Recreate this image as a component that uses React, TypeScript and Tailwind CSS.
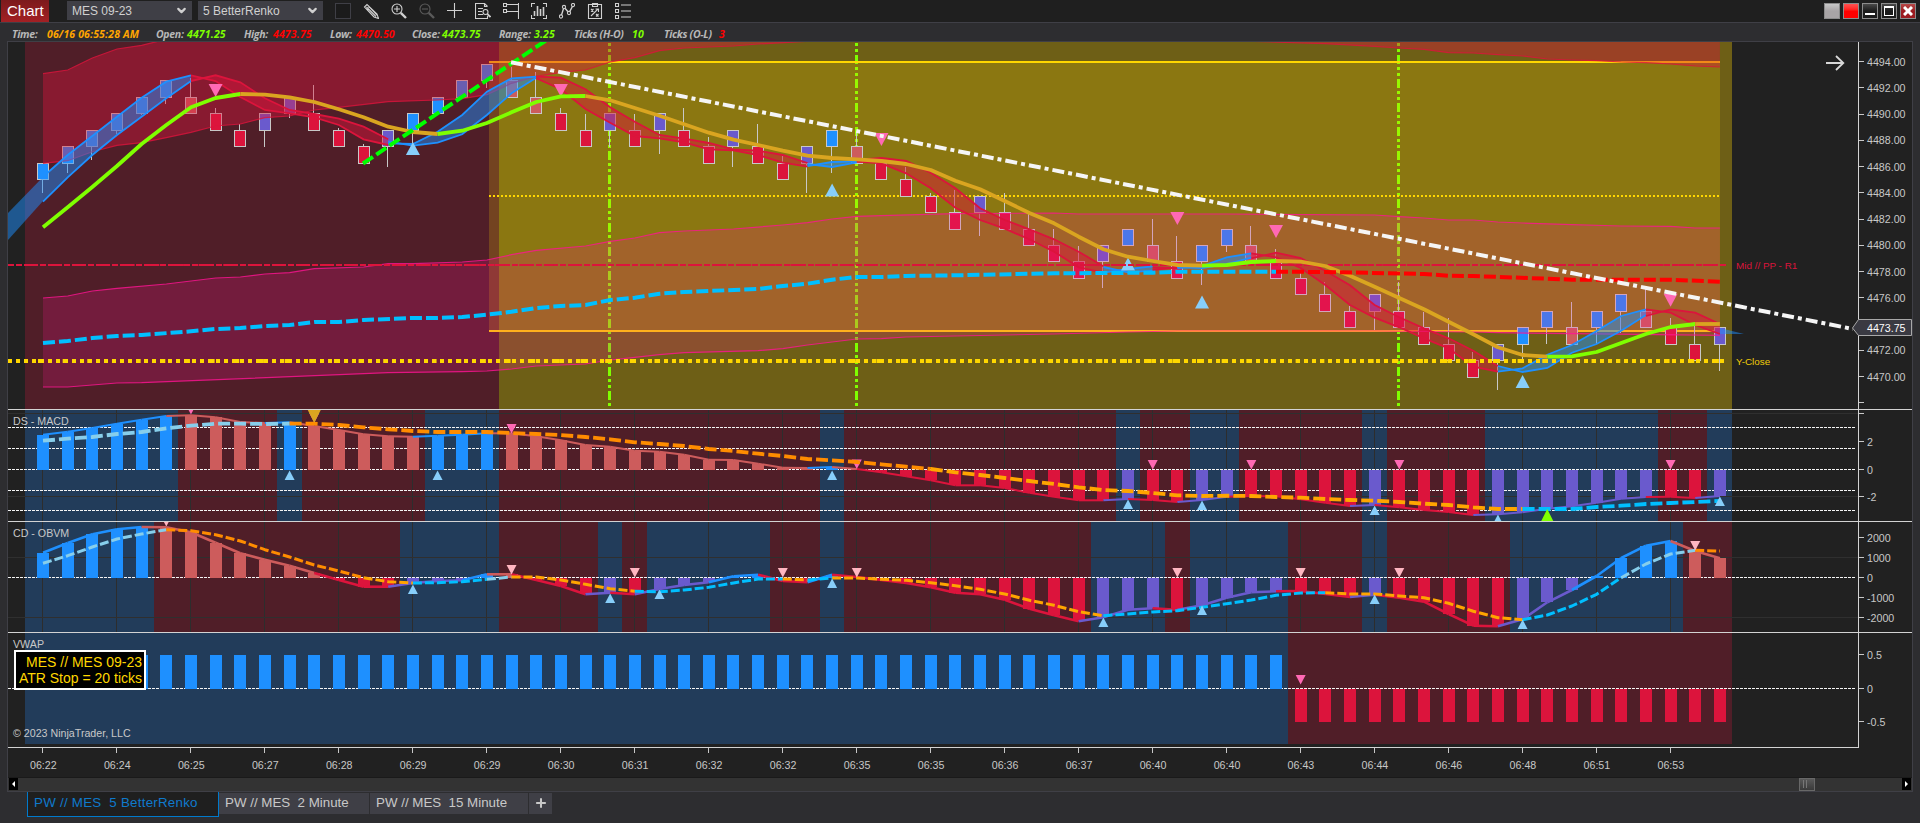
import React from 'react';
import { ChevronDown, Plus } from 'lucide-react';

type Point = [number, number];
type Run = { from: number; to: number; color: string };

const BLUE = '#1e90ff';
const SLATE = '#6a5acd';
const CRIMSON = '#dc143c';
const INDIAN = '#cd5c5c';
const SKY = '#87ceeb';
const DEEP_SKY = '#00bfff';
const DARK_ORANGE = '#ff8c00';
const ORANGE = '#ffa500';
const LIME = '#7fff00';
const GOLDENROD = '#daa520';
const PINK = '#ff69b4';
const LIGHT_PINK = '#ffb6c1';
const LIGHT_SKY = '#87cefa';

const KIND: Record<string, string> = { U: BLUE, u: SLATE, D: CRIMSON, d: INDIAN };

const BARS = 69;
const x = (i: number) => 43 + 24.66 * i;
// Price pane values are stored in thirds of a pixel from the window top,
// indicator values in thirds of a pixel from y = 400
const py = (v: number) => v / 3;
const iy = (v: number) => 400 + v / 3;

const expand = (runs: string) =>
  runs.split(' ').flatMap(r => Array<string>(Number(r.slice(1))).fill(r[0]));

const toPath = (points: Point[], y: (v: number) => number) =>
  points.map(([i, v], n) => `${n ? 'L' : 'M'}${x(i).toFixed(1)} ${y(v).toFixed(1)}`).join('');

const slice = (values: number[], from: number, to: number): Point[] =>
  values.slice(from, to + 1).map((v, n) => [from + n, v]);

// [level, kind, wick end]
const candles: [number, string, number][] = [
  [6, 'U', 578], [5, 'U', 518], [4, 'U', 480], [3, 'U', 402], [2, 'U', 345], [1, 'U', 312],
  [2, 'd', 233], [3, 'D', 324], [4, 'D', 372], [3, 'u', 440], [2, 'u', 353], [3, 'D', 255],
  [4, 'D', 383], [5, 'D', 432], [4, 'u', 500], [3, 'U', 437], [2, 'U', 330], [1, 'U', 280],
  [0, 'U', 264], [1, 'd', 200], [2, 'd', 216], [3, 'D', 324], [4, 'D', 342], [3, 'u', 440],
  [4, 'D', 342], [3, 'u', 462], [4, 'D', 324], [5, 'D', 411], [4, 'u', 500], [5, 'D', 372],
  [6, 'D', 468], [5, 'u', 579], [4, 'U', 519], [5, 'd', 395], [6, 'D', 500], [7, 'D', 501],
  [8, 'D', 579], [9, 'D', 570], [8, 'u', 708], [9, 'D', 579], [10, 'D', 640], [11, 'D', 687],
  [12, 'D', 738], [11, 'u', 864], [10, 'U', 700], [11, 'd', 657], [12, 'D', 708], [11, 'U', 855],
  [10, 'U', 756], [11, 'd', 678], [12, 'D', 747], [13, 'D', 820], [14, 'D', 846], [15, 'D', 918],
  [14, 'u', 990], [15, 'D', 846], [16, 'D', 935], [17, 'D', 954], [18, 'D', 1055], [17, 'u', 1170],
  [16, 'U', 1090], [15, 'U', 1031], [16, 'd', 906], [15, 'U', 1031], [14, 'U', 1000],
  [15, 'd', 868], [16, 'D', 954], [17, 'D', 965], [16, 'u', 1112]
];

const crimsonLower: Point[] = [
  [0, 490], [1, 482], [2, 455], [3, 436], [4, 428], [5, 413], [6, 397], [7, 378], [8, 372],
  [9, 353], [10, 348], [11, 330], [12, 322], [14, 305], [16, 300], [17, 296], [18, 284],
  [19, 250], [20, 229], [21, 217], [22, 210], [23, 186], [24, 173], [25, 152], [26, 144],
  [28, 138], [29, 132], [31, 124], [49, 124], [51, 129], [52, 131], [54, 139], [55, 144],
  [56, 148], [57, 158], [58, 159], [59, 164], [60, 168], [61, 177], [62, 180], [63, 182],
  [64, 186], [65, 188], [66, 192], [67, 198], [68, 201]
];
const crimsonUpper: Point[] = [[0, 221], [1, 210], [2, 174], [3, 147], [4, 136], [5, 118], [68, 118]];

const magentaUpper: Point[] = [
  [0, 894], [1, 888], [2, 873], [3, 865], [5, 852], [7, 834], [8, 831], [9, 822], [10, 818],
  [11, 806], [13, 801], [14, 791], [15, 791], [17, 786], [18, 780], [19, 764], [20, 751],
  [22, 738], [23, 724], [24, 714], [25, 698], [26, 693], [28, 687], [30, 675], [31, 668],
  [32, 657], [33, 649], [34, 647], [37, 641], [41, 639], [42, 642], [48, 642], [54, 645],
  [55, 650], [56, 654], [57, 660], [58, 660], [59, 666], [60, 669], [62, 674], [64, 678],
  [66, 679], [67, 684], [68, 684]
];
const magentaLower: Point[] = [
  [0, 1161], [1, 1161], [3, 1149], [4, 1148], [14, 1118], [17, 1115], [18, 1113], [19, 1107],
  [20, 1098], [22, 1092], [23, 1080], [24, 1072], [25, 1064], [26, 1058], [29, 1052],
  [30, 1046], [31, 1035], [32, 1026], [33, 1017], [34, 1016], [35, 1011], [37, 1008],
  [41, 1002], [44, 996], [46, 993], [54, 993], [58, 996], [59, 998], [62, 1001], [68, 1006]
];

const vwapBlue: Point[] = [
  [0, 1029], [1, 1023], [2, 1014], [3, 1008], [4, 1005], [6, 994], [7, 987], [8, 984], [9, 978],
  [10, 975], [11, 966], [12, 966], [13, 960], [15, 954], [16, 954], [17, 951], [18, 944],
  [19, 935], [20, 924], [21, 918], [22, 915], [23, 900], [24, 893], [25, 881], [26, 876],
  [29, 867], [30, 858], [31, 851], [32, 839], [33, 831], [34, 831], [35, 828], [37, 826],
  [41, 820], [45, 818], [46, 815], [50, 815]
];
const vwapRed: Point[] = [[50, 815], [52, 816], [56, 822], [57, 827], [58, 828], [61, 836], [62, 839], [66, 839], [68, 845]];

const average = [
  682, 622, 561, 498, 432, 375, 322, 294, 282, 284, 292, 306, 328, 352, 380, 396, 402, 392, 369,
  337, 306, 289, 288, 301, 324, 347, 373, 398, 419, 435, 452, 467, 474, 478, 483, 492, 510, 542,
  568, 603, 639, 670, 710, 748, 770, 783, 795, 797, 795, 786, 783, 785, 798, 827, 860, 894, 928,
  965, 1003, 1042, 1065, 1070, 1069, 1056, 1029, 1002, 981, 972, 972
];
const averageRuns: Run[] = [
  { from: 0, to: 8, color: LIME },
  { from: 8, to: 16, color: GOLDENROD },
  { from: 16, to: 22, color: LIME },
  { from: 22, to: 47, color: GOLDENROD },
  { from: 47, to: 50, color: LIME },
  { from: 50, to: 61, color: GOLDENROD },
  { from: 61, to: 67, color: LIME },
  { from: 67, to: 68, color: GOLDENROD }
];

const ribbons: { start: number; color: string; a: number[]; b: number[] }[] = [
  { start: 0, color: BLUE, a: [530, 465, 408, 350, 293, 245, 226], b: [605, 532, 465, 405, 350, 295, 243] },
  { start: 6, color: CRIMSON, a: [226, 243, 291, 330, 340, 352, 375, 418, 435], b: [243, 226, 247, 295, 330, 342, 356, 380, 418] },
  { start: 14, color: BLUE, a: [430, 432, 395, 345, 275, 235, 230], b: [425, 437, 428, 403, 345, 280, 233] },
  {
    start: 20,
    color: CRIMSON,
    a: [235, 268, 327, 368, 408, 415, 427, 448, 451, 465, 488, 500],
    b: [230, 233, 268, 322, 365, 405, 416, 429, 448, 452, 465, 489]
  },
  { start: 31, color: BLUE, a: [498, 486, 484], b: [492, 501, 487] },
  {
    start: 33,
    color: CRIMSON,
    a: [485, 490, 520, 565, 623, 660, 686, 718, 755, 802, 818],
    b: [480, 474, 483, 518, 565, 625, 660, 688, 718, 755, 799]
  },
  { start: 43, color: BLUE, a: [818, 807, 799], b: [801, 817, 812] },
  { start: 45, color: CRIMSON, a: [810, 802], b: [802, 804] },
  { start: 46, color: BLUE, a: [804, 798, 772, 760], b: [802, 804, 792, 773] },
  {
    start: 49,
    color: CRIMSON,
    a: [760, 772, 804, 855, 915, 953, 982, 1015, 1045, 1100, 1115],
    b: [775, 758, 774, 812, 856, 915, 952, 985, 1015, 1052, 1098]
  },
  { start: 59, color: BLUE, a: [1115, 1105, 1064, 1035, 993, 948, 928], b: [1098, 1116, 1104, 1058, 1032, 992, 945] },
  { start: 65, color: CRIMSON, a: [928, 938, 975, 1002], b: [948, 928, 938, 972] }
];

const macd = [
  104, 95, 84, 71, 59, 48, 46, 52, 66, 69, 67, 78, 90, 103, 109, 110, 107, 104, 100, 100, 109,
  121, 135, 140, 152, 155, 164, 179, 180, 191, 203, 204, 201, 207, 217, 229, 241, 256, 256, 264,
  278, 290, 301, 301, 297, 300, 306, 300, 290, 288, 289, 298, 308, 318, 315, 322, 330, 336, 345,
  343, 337, 326, 319, 308, 296, 291, 290, 294, 288
];
const macdKinds = expand('U6 d4 U1 d5 U3 d13 U1 d1 D10 u1 D2 u2 D5 u1 D4 u7 D2 u1');
const macdSignal = [
  122, 116, 111, 102, 96, 85, 77, 71, 71, 72, 71, 71, 75, 82, 88, 93, 96, 96, 96, 99, 102, 105,
  111, 118, 127, 132, 138, 147, 153, 161, 168, 177, 181, 186, 193, 200, 207, 217, 225, 234, 243,
  252, 262, 270, 273, 279, 286, 288, 287, 288, 291, 293, 297, 300, 302, 306, 311, 315, 322, 327,
  327, 327, 327, 321, 317, 312, 309, 306, 303
];
const macdRuns: Run[] = [
  { from: 0, to: 10, color: SKY },
  { from: 10, to: 36, color: DARK_ORANGE },
  { from: 36, to: 60, color: ORANGE },
  { from: 60, to: 68, color: DEEP_SKY }
];
const macdZones = [6, 10, 11, 16, 19, 32, 33, 44, 45, 47, 49, 54, 55, 59, 66, 68];

const obvm = [
  458, 429, 403, 388, 381, 382, 397, 428, 460, 479, 497, 519, 540, 560, 560, 549, 543, 541, 523,
  523, 540, 558, 583, 578, 583, 567, 555, 547, 529, 524, 543, 547, 524, 531, 540, 549, 562, 578,
  583, 599, 626, 646, 664, 652, 629, 625, 629, 616, 593, 577, 574, 573, 582, 591, 584, 593, 605,
  642, 677, 679, 658, 607, 570, 528, 474, 437, 423, 453, 475
];
const obvmKinds = expand('U5 d7 D3 u3 U1 d1 D3 u1 D1 u3 U2 D2 U1 D10 u3 D1 u4 D3 u1 D5 u3 U4 d2');
const obvmSignal = [
  490, 467, 441, 417, 402, 389, 392, 404, 423, 449, 471, 495, 513, 533, 545, 549, 548, 545, 538,
  531, 531, 540, 553, 566, 574, 575, 570, 562, 549, 537, 537, 540, 534, 534, 538, 541, 548, 557,
  568, 582, 601, 616, 635, 647, 642, 636, 632, 622, 611, 600, 586, 579, 578, 582, 582, 588, 593,
  610, 634, 653, 659, 645, 618, 583, 533, 492, 462, 451, 453
];
const obvmRuns: Run[] = [
  { from: 0, to: 5, color: SKY },
  { from: 5, to: 13, color: DARK_ORANGE },
  { from: 13, to: 15, color: ORANGE },
  { from: 15, to: 18, color: DEEP_SKY },
  { from: 18, to: 19, color: SKY },
  { from: 19, to: 24, color: ORANGE },
  { from: 24, to: 30, color: DEEP_SKY },
  { from: 30, to: 31, color: ORANGE },
  { from: 31, to: 32, color: DEEP_SKY },
  { from: 32, to: 43, color: ORANGE },
  { from: 43, to: 52, color: DEEP_SKY },
  { from: 52, to: 60, color: ORANGE },
  { from: 60, to: 64, color: DEEP_SKY },
  { from: 64, to: 67, color: SKY },
  { from: 67, to: 68, color: DARK_ORANGE }
];
const obvmZones = [5, 15, 19, 23, 24, 25, 30, 32, 33, 43, 46, 47, 51, 54, 55, 60, 67];

const times = [
  '06:22', '06:24', '06:25', '06:27', '06:28', '06:29', '06:29', '06:30', '06:31', '06:32',
  '06:32', '06:35', '06:35', '06:36', '06:37', '06:40', '06:40', '06:43', '06:44', '06:46',
  '06:48', '06:51', '06:53'
];

const indicatorTicks: [number, string][] = [
  [7, ''], [40, ''], [125, '2'], [208, '0'], [289, '-2'],
  [413, '2000'], [472, '1000'], [532, '0'], [592, '-1000'], [652, '-2000'],
  [764, '0.5'], [865, '0'], [965, '-0.5']
];

const Down = ({ i, y, w = 10, h = 9.5, fill = PINK }: { i: number; y: number; w?: number; h?: number; fill?: string }) => (
  <polygon points={`${x(i) - w / 2},${y} ${x(i) + w / 2},${y} ${x(i)},${y + h}`} fill={fill} />
);

const Up = ({ i, y, w = 10, h = 9.5, fill = LIGHT_SKY }: { i: number; y: number; w?: number; h?: number; fill?: string }) => (
  <polygon points={`${x(i) - w / 2},${y + h} ${x(i) + w / 2},${y + h} ${x(i)},${y}`} fill={fill} />
);

const Zones = ({ starts, y, height }: { starts: number[]; y: number; height: number }) => {
  const edges = [25, ...starts.map(i => Math.round(30.5 + 24.66 * i)), 1732];
  return (
    <>
      {edges.slice(0, -1).map((left, n) => (
        <rect key={n} x={left} y={y} width={edges[n + 1] - left} height={height} fill={n % 2 ? '#501e28' : '#223c5a'} />
      ))}
    </>
  );
};

const Histogram = ({ values, kinds, zero, stroke }: { values: number[]; kinds: string[]; zero: number; stroke: number }) => (
  <>
    {values.map((v, i) => {
      const top = Math.round(Math.min(iy(v), zero));
      const bottom = Math.round(Math.max(iy(v), zero));
      return <rect key={i} x={Math.round(x(i)) - 6} y={top} width={12} height={bottom - top} fill={KIND[kinds[i]]} />;
    })}
    {values.slice(1).map((_, n) => (
      <path key={n} d={toPath(slice(values, n, n + 1), iy)} stroke={KIND[kinds[n + 1]]} strokeWidth={stroke} fill="none" />
    ))}
  </>
);

const Runs = ({ values, runs, y, width, dash }: { values: number[]; runs: Run[]; y: (v: number) => number; width: number; dash?: string }) => (
  <>
    {runs.map(r => (
      <path
        key={r.from}
        d={toPath(slice(values, r.from, r.to), y)}
        stroke={r.color}
        strokeWidth={width}
        strokeDasharray={dash}
        strokeLinejoin="round"
        fill="none"
      />
    ))}
  </>
);

const Band = ({ upper, lower, color, opacity }: { upper: Point[]; lower: Point[]; color: string; opacity: number }) => (
  <>
    <path
      d={`${toPath(upper, py)}${toPath([...lower].reverse(), py).replace('M', 'L')}Z`}
      fill={color}
      fillOpacity={opacity}
    />
    <path d={toPath(upper, py)} stroke={color} strokeOpacity={0.8} strokeWidth={1.2} fill="none" />
    <path d={toPath(lower, py)} stroke={color} strokeOpacity={0.8} strokeWidth={1.2} fill="none" />
  </>
);

const PricePane = () => (
  <g clipPath="url(#price)">
    <rect x={25} y={42} width={474} height={368} fill="#501e28" />
    <rect x={499} y={42} width={1233} height={368} fill="#6e5f16" />

    {/* Session markers */}
    {[609.5, 856.5, 1398.5].map(cx => (
      <path key={cx} d={`M${cx} 31V410`} stroke={LIME} strokeWidth={3} strokeDasharray="9 3 3 3 3 3" />
    ))}

    {/* Opening range */}
    <rect x={489} y={62} width={1231} height={269} fill="#ffd700" fillOpacity={0.2} />
    <path d="M489 62H1720" stroke="#ffd700" strokeWidth={2} />
    <path d="M489 331H1720" stroke="#ffd700" strokeWidth={2} />
    <path d="M489 196H1719" stroke="#ffd700" strokeWidth={2} strokeDasharray="2 2" />

    {/* Candles */}
    <g shapeRendering="crispEdges">
      {candles.map(([level, kind, wick], i) => {
        const top = Math.round((192 + 49.37 * level) / 3);
        const bottom = Math.round((192 + 49.37 * (level + 1)) / 3);
        const cx = Math.round(x(i));
        const up = kind.toUpperCase() === 'U';
        const from = up ? bottom : Math.min(top, wick / 3);
        const to = up ? Math.max(bottom, wick / 3) : top;
        return (
          <g key={i}>
            <rect x={cx - 1} y={from} width={1} height={to - from} fill="#c8c8c8" />
            <rect x={cx - 6} y={top} width={12} height={bottom - top + 1} fill="#c8c8c8" />
            <rect x={cx - 5} y={top + 1} width={10} height={bottom - top - 1} fill={KIND[kind]} />
          </g>
        );
      })}
    </g>

    <Band upper={crimsonUpper} lower={crimsonLower} color={CRIMSON} opacity={0.4} />
    <Band upper={magentaUpper} lower={magentaLower} color="#ff1493" opacity={0.2} />

    {/* Trend ribbon */}
    <polygon points="8,213 43,177 43,201 8,240" fill={BLUE} fillOpacity={0.5} />
    <polygon points="1720,328 1744,334 1720,334" fill={BLUE} fillOpacity={0.5} />
    {ribbons.map(({ start, color, a, b }) => {
      const lineA = a.map((v, n): Point => [start + n, v]);
      const lineB = b.map((v, n): Point => [start + n, v]);
      return (
        <g key={start}>
          <path
            d={`${toPath(lineA, py)}${toPath([...lineB].reverse(), py).replace('M', 'L')}Z`}
            fill={color}
            fillOpacity={0.48}
          />
          <path d={toPath(lineA, py)} stroke={color} strokeWidth={1.8} fill="none" />
          <path d={toPath(lineB, py)} stroke={color} strokeWidth={1.8} fill="none" />
        </g>
      );
    })}

    {/* Signals */}
    {([[7, 84], [21, 84], [34, 133], [46, 212], [50, 225], [66, 293.7]] as Point[]).map(([i, y]) => (
      <Down key={i} i={i} y={y} w={14} h={13} />
    ))}
    {([[15, 142], [32, 183.5], [44, 257.5], [47, 295.5], [60, 375]] as Point[]).map(([i, y]) => (
      <Up key={i} i={i} y={y} w={14} h={13} />
    ))}

    <path d="M8 265H1726" stroke={CRIMSON} strokeWidth={2} strokeDasharray="6 2" />
    <path d="M26 265H1720" stroke={CRIMSON} strokeWidth={2} strokeDasharray="10 14.66" />
    <Runs values={average} runs={averageRuns} y={py} width={3.8} />
    <path d={toPath(vwapBlue, py)} stroke={DEEP_SKY} strokeWidth={4} strokeDasharray="12 4" fill="none" />
    <path d={toPath(vwapRed, py)} stroke="#ff0000" strokeWidth={4} strokeDasharray="12 4" fill="none" />
    <path d="M8 361H1725" stroke="#ffd700" strokeWidth={4} strokeDasharray="4 4" />
    <path d="M38 361H1725" stroke="#ffd700" strokeWidth={4} strokeDasharray="4 20.66" />

    <path d="M363 163.5L560 31" stroke="#00ff00" strokeWidth={4} strokeDasharray="12 4" />
  </g>
);

const ChartCanvas = () => (
  <svg className="block h-[735px] w-[1904px]" viewBox="8 42 1904 735">
    <defs>
      <clipPath id="price"><rect x={7} y={42} width={1852} height={367} /></clipPath>
      <clipPath id="macd"><rect x={7} y={410} width={1852} height={111} /></clipPath>
      <clipPath id="obvm"><rect x={7} y={522} width={1852} height={110} /></clipPath>
    </defs>
    <rect x={7} y={42} width={1905} height={735} fill="#212121" />
    <PricePane />

    {/* Indicator backgrounds and grid */}
    <g shapeRendering="crispEdges">
      <Zones starts={macdZones} y={410} height={111} />
      <Zones starts={obvmZones} y={522} height={110} />
      <Zones starts={[51]} y={633} height={111} />
      {times.map((_, n) => (
        <rect key={n} x={Math.round(x(n * 3)) - 1} y={410} width={1} height={222} fill="#2d2d2d" />
      ))}
      {[40, 289, 472, 652].map(v => (
        <rect key={v} x={7} y={Math.floor(iy(v))} width={1851} height={1} fill="#2f2f2f" />
      ))}
    </g>

    <g clipPath="url(#macd)">
      {[82, 145, 208, 271, 331].map(v => (
        <path key={v} d={`M8 ${Math.floor(iy(v)) + 0.5}H1856`} stroke="#f5f5f5" strokeDasharray="3 1" />
      ))}
      <Histogram values={macd} kinds={macdKinds} zero={469.5} stroke={2} />
      {([[6, 405], [11, 413], [19, 424], [33, 459.5], [45, 460], [49, 460], [55, 460], [66, 460]] as Point[]).map(([i, y]) => (
        <Down key={i} i={i} y={y} />
      ))}
      <Runs values={macdSignal} runs={macdRuns} y={iy} width={3.8} dash="12 4" />
      <Down i={11} y={409} w={14} h={14} fill={GOLDENROD} />
      {([[10, 470.5], [16, 470.5], [32, 470.5], [44, 499.5], [47, 500.5], [54, 505.5], [59, 514.5], [68, 496.5]] as Point[]).map(([i, y]) => (
        <Up key={i} i={i} y={y} />
      ))}
      <Up i={61} y={509} w={12} h={12} fill={LIME} />
    </g>

    <g clipPath="url(#obvm)">
      <path d="M8 577.5H1856" stroke="#f5f5f5" strokeDasharray="3 1" />
      <Histogram values={obvm} kinds={obvmKinds} zero={577.5} stroke={2.6} />
      <Runs values={obvmSignal} runs={obvmRuns} y={iy} width={3} dash="9 3" />
      {([[5, 517], [19, 565], [24, 568], [30, 568], [33, 568], [46, 568], [51, 568], [55, 568], [67, 541]] as Point[]).map(([i, y]) => (
        <Down key={i} i={i} y={y} fill={LIGHT_PINK} />
      ))}
      {([[15, 584.5], [23, 593.5], [25, 589.5], [32, 578.5], [43, 617.5], [47, 605.5], [54, 594.5], [60, 619.5]] as Point[]).map(([i, y]) => (
        <Up key={i} i={i} y={y} />
      ))}
    </g>

    <path d="M8 688.5H1856" stroke="#f5f5f5" strokeDasharray="3 1" />
    {Array.from({ length: BARS }, (_, i) => (
      <rect
        key={i}
        x={Math.round(x(i)) - 6}
        y={i < 51 ? 655 : 689}
        width={12}
        height={i < 51 ? 34 : 33}
        fill={i < 51 ? BLUE : CRIMSON}
      />
    ))}
    <Down i={51} y={675} />

    {/* Frame lines and axes */}
    <g fill="#d3d3d3" shapeRendering="crispEdges">
      <rect x={7} y={409} width={1905} height={1} />
      <rect x={7} y={521} width={1905} height={1} />
      <rect x={7} y={632} width={1905} height={1} />
      <rect x={7} y={747} width={1852} height={1} />
      <rect x={1858} y={42} width={1} height={706} />
    </g>

    <g fill="#c8c8c8" fontFamily="'Liberation Sans', Arial, sans-serif" fontSize={10.67}>
      {/* The 4474 label gives way to the last price tag */}
      {Array.from({ length: 13 }, (_, n) => n).filter(n => n !== 10).map(n => {
        const y = 61.5 + n * 26.25;
        return (
          <g key={n}>
            <rect x={1859} y={Math.round(y - 0.5)} width={5} height={1} />
            <text x={1867} y={y + 4}>{(4494 - n * 2).toFixed(2)}</text>
          </g>
        );
      })}
      {indicatorTicks.map(([v, label]) => (
        <g key={v}>
          <rect x={1859} y={Math.floor(iy(v))} width={5} height={1} />
          {label && <text x={1867} y={iy(v) + 4.4}>{label}</text>}
        </g>
      ))}
      {times.map((t, n) => (
        <g key={n}>
          <rect x={Math.round(x(n * 3)) - 1} y={748} width={1} height={5} />
          <text x={x(n * 3) + 0.3} y={769} textAnchor="middle">{t}</text>
        </g>
      ))}
      <text x={13} y={425}>DS - MACD</text>
      <text x={13} y={537}>CD - OBVM</text>
      <text x={13} y={648}>VWAP</text>
      <text x={13} y={737}>© 2023 NinjaTrader, LLC</text>
    </g>
    <g fontFamily="'Liberation Sans', Arial, sans-serif" fontSize={9.9}>
      <text x={1736} y={269} fill={CRIMSON}>Mid // PP - R1</text>
      <text x={1736} y={365} fill="#f0cc08">Y-Close</text>
    </g>

    <path d="M511 62.3L1853 329" stroke="#f5f5f5" strokeWidth={4} strokeDasharray="12 4 4 4" />

    {/* Last price */}
    <path d="M1852.5 328L1858.5 319.5H1911.5V335.5H1858.5Z" fill="#3a3a42" stroke="#a8a8a8" />
    <text x={1867} y={332} fill="#ffffff" fontFamily="'Liberation Sans', Arial, sans-serif" fontSize={10.67}>4473.75</text>

    <path d="M1826 63H1843M1836 56L1843.3 63L1836 70" stroke="#d8d8d8" strokeWidth={1.8} fill="none" />
  </svg>
);

const toolIcons: { name: string; dim?: boolean; body: React.ReactNode }[] = [
  {
    name: 'pencil',
    body: <path d="M1.5 4L4 1.5L14 11L15.5 15.5L11 14ZM4 6.5L6.5 4M3.5 4L13 13.5M5.5 3L14 12" />
  },
  {
    name: 'zoom-in',
    body: (
      <>
        <circle cx="6" cy="6" r="5" />
        <path d="M3 6H9M6 3V9" />
        <path d="M9.8 9.8L15 15" strokeWidth="2.4" />
      </>
    )
  },
  {
    name: 'zoom-out',
    dim: true,
    body: (
      <>
        <circle cx="6" cy="6" r="5" />
        <path d="M3 6H9" />
        <path d="M9.8 9.8L15 15" strokeWidth="2.4" />
      </>
    )
  },
  { name: 'crosshair', body: <path d="M7.5 0V15M0 7.5H15" /> },
  {
    name: 'data-box',
    body: (
      <>
        <path d="M12.5 3.5L9.5 .5H.5V15.5H12.5V13M9.5 .5V3.5H12.5M3 5.5H8M3 8.5H7M3 11.5H8" />
        <circle cx="10.5" cy="9" r="2.5" />
        <path d="M12.3 11L15.5 14" strokeWidth="1.8" />
      </>
    )
  },
  { name: 'chart-trader', body: <path d="M.5 .5H3.5V3.5H.5ZM.5 6.5H3.5V9.5H.5ZM3.5 1.5H16M3.5 8.5H15.5M15.5 0V16" /> },
  {
    name: 'indicators',
    body: (
      <>
        <path d="M4 .5H.5V4M12 .5H15.5V4M.5 12V15.5H4M15.5 12V15.5H12" />
        <path d="M3.5 8V13M6.5 3V13M9.5 6V13M12.5 4V13" strokeWidth="1.6" />
      </>
    )
  },
  {
    name: 'strategies',
    body: (
      <>
        <circle cx="2" cy="13.5" r="1.6" />
        <circle cx="5" cy="4" r="1.6" />
        <circle cx="10" cy="10" r="1.6" />
        <circle cx="14" cy="2" r="1.6" />
        <path d="M2.5 12L4.5 5.6M6 5.3L9 8.8M10.7 8.6L13.4 3.5" strokeWidth="1.4" />
      </>
    )
  },
  {
    name: 'clipboard',
    body: <path d="M1.5 1.5H14.5V15.5H1.5ZM5.5 .5H10.5V3.5H5.5ZM4 6L6.5 8.5M6.5 6L4 8.5M4 13L11 6M8.5 6H11.5V9M9 11L11.5 13.5M11.5 11L9 13.5" />
  },
  {
    name: 'properties',
    body: <path d="M.5 .5H3.5V3.5H.5ZM.5 6.5H3.5V9.5H.5ZM.5 12.5H3.5V15.5H.5ZM6 2H16M6 8H16M6 14H16" />
  }
];

const readings = [
  { label: 'Time:', value: '06/16 06:55:28 AM', item: 'w-[144px]', caption: 'w-[35px]', color: 'text-[#ffa500]' },
  { label: 'Open:', value: '4471.25', item: 'w-[88px]', caption: 'w-[31px]', color: 'text-[#7fff00]' },
  { label: 'High:', value: '4473.75', item: 'w-[86px]', caption: 'w-[29px]', color: 'text-[#ff0000]' },
  { label: 'Low:', value: '4470.50', item: 'w-[82px]', caption: 'w-[26px]', color: 'text-[#ff0000]' },
  { label: 'Close:', value: '4473.75', item: 'w-[87px]', caption: 'w-[30px]', color: 'text-[#7fff00]' },
  { label: 'Range:', value: '3.25', item: 'w-[75px]', caption: 'w-[35px]', color: 'text-[#7fff00]' },
  { label: 'Ticks (H-O)', value: '10', item: 'w-[90px]', caption: 'w-[58px]', color: 'text-[#7fff00]' },
  { label: 'Ticks (O-L)', value: '3', item: 'w-[70px]', caption: 'w-[55px]', color: 'text-[#ff0000]' }
];

const Picker = ({ label }: { label: string }) => (
  <div className="mt-px flex h-[19px] w-[125px] items-center justify-between bg-[#3f3f46] pl-[5px] pr-1 text-[12px] text-[#d0d0d0]">
    {label}
    <ChevronDown className="h-[13px] w-[13px]" strokeWidth={4} />
  </div>
);

const TitleBar = () => (
  <div className="flex h-[22px] items-start bg-[#1f1f1f] pl-px">
    <div className="flex h-[22px] w-12 items-center bg-linear-to-b from-[#7c1a1c] to-[#a32024] pl-1.5 text-[15px] text-white">Chart</div>
    <div className="ml-[18px] flex gap-1.5">
      <Picker label="MES 09-23" />
      <Picker label="5 BetterRenko" />
    </div>
    <div className="mt-[3px] ml-3 flex gap-3">
      <div className="h-4 w-4 border border-[#3f3f46] bg-[#1b1b1b]" />
      {toolIcons.map(({ name, dim, body }) => (
        <svg
          key={name}
          className={dim ? 'h-4 w-4 text-[#5a5a5a]' : 'h-4 w-4 text-[#d0d0d0]'}
          viewBox="0 0 16 16"
          fill="none"
          stroke="currentColor"
          strokeWidth="1.1"
        >
          {body}
        </svg>
      ))}
    </div>
    <div className="mt-[3px] mr-1 ml-auto flex gap-[3px]">
      <div className="h-4 w-4 border border-[#8c8c8c] bg-linear-to-b from-[#c8c8c8] to-[#a8a4a6] to-50%" />
      <div className="h-4 w-4 border border-[#8c8c8c] bg-linear-to-b from-[#ff5050] to-[#ff0000] to-50%" />
      <div className="flex h-4 w-4 items-end justify-center border border-[#8c8c8c] bg-linear-to-b from-[#4a4a4a] to-[#1c1c1c] to-50% pb-[3px]">
        <div className="h-0.5 w-2.5 bg-white" />
      </div>
      <div className="flex h-4 w-4 items-center justify-center border border-[#8c8c8c] bg-linear-to-b from-[#4a4a4a] to-[#1c1c1c] to-50%">
        <div className="h-2.5 w-2.5 border border-t-2 border-white" />
      </div>
      <div className="flex h-4 w-4 items-center justify-center border border-[#8c8c8c] bg-linear-to-b from-[#b84848] to-[#9c1c20] to-50%">
        <svg className="h-2.5 w-2.5" viewBox="0 0 10 10" stroke="#ffffff" strokeWidth="3">
          <path d="M1 1L9 9M9 1L1 9" />
        </svg>
      </div>
    </div>
  </div>
);

const DataBar = () => (
  <div className="flex h-[19px] items-center border-t border-[#3f3f46] pt-[5px] pl-3 font-['Open_Sans','Noto_Sans',sans-serif] text-[10.5px] leading-none font-bold whitespace-nowrap italic">
    {readings.map(({ label, value, item, caption, color }) => (
      <div key={label} className={`flex shrink-0 ${item}`}>
        <span className={`shrink-0 tracking-[-0.3px] text-[#b8b8b8] ${caption}`}>{label}</span>
        <span className={`tracking-[0.15px] ${color}`}>{value}</span>
      </div>
    ))}
  </div>
);

const ScrollBar = () => (
  <div className="flex h-[14px] items-center border-t border-[#1a1a1a] bg-[#333333] pl-px">
    <div className="flex h-3 w-[9px] items-center justify-center bg-black">
      <div className="border-y-[3px] border-r-[3px] border-y-transparent border-r-white" />
    </div>
    <div className="ml-auto mr-[87px] flex h-[13px] w-4 items-center gap-0.5 border border-[#686868] bg-linear-to-b from-[#5a5a5a] to-[#3a3a3a] pl-[3px]">
      <div className="h-2 w-px bg-[#777777]" />
      <div className="h-2 w-px bg-[#777777]" />
    </div>
    <div className="mr-px flex h-3 w-[9px] items-center justify-center bg-black">
      <div className="border-y-[3px] border-l-[3px] border-y-transparent border-l-white" />
    </div>
  </div>
);

const Tabs = () => (
  <div className="flex h-[32px] items-start pl-[27px] text-[13.33px] text-[#c8c8c8]">
    <div className="flex h-[25px] w-48 items-center border-x border-b border-[#007acc] bg-[#1f1f1f] pb-px pl-1.5 tracking-[0.25px] whitespace-pre text-[#0f7acc]">
      {'PW // MES  5 BetterRenko'}
    </div>
    <div className="mt-px flex gap-px">
      <div className="flex h-[21px] w-[150px] items-center bg-[#3f3f46] pl-1.5 whitespace-pre">{'PW // MES  2 Minute'}</div>
      <div className="flex h-[21px] w-[158px] items-center bg-[#3f3f46] pl-1.5 whitespace-pre">{'PW // MES  15 Minute'}</div>
      <div className="flex h-[21px] w-[23px] items-center justify-center bg-[#3f3f46]">
        <Plus className="h-3.5 w-3.5" strokeWidth={3.5} />
      </div>
    </div>
  </div>
);

const App: React.FC = () => (
  <div className="flex h-[823px] w-[1920px] flex-col overflow-hidden bg-[#2d2d30] font-['Liberation_Sans',Arial,sans-serif]">
    <TitleBar />
    <DataBar />
    <div className="ml-[7px] w-[1906px] border border-[#3f3f46]">
      <div className="relative">
        <ChartCanvas />
        <div className="absolute top-[608px] left-[6px] h-10 w-[132px] border-2 border-white bg-black pt-0.5 pr-0.5 text-right text-[14px] leading-4 whitespace-nowrap text-[#ffd700]">
          <div>MES // MES 09-23</div>
          <div>ATR Stop = 20 ticks</div>
        </div>
      </div>
      <ScrollBar />
    </div>
    <Tabs />
  </div>
);

export default App;
